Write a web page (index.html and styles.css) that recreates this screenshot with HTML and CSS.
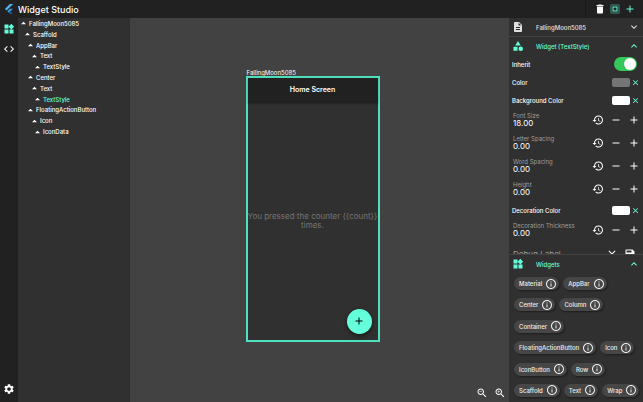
FILE: index.html
```html
<!DOCTYPE html>
<html lang="en">
<head>
  <meta charset="UTF-8">
  <meta name="viewport" content="width=device-width, initial-scale=1.0">
  <title>Widget Studio</title>
  <link rel="stylesheet" href="styles.css">
</head>
<body>

  <!-- icon set -->
  <svg class="sprite" aria-hidden="true">
    <symbol id="flutter" viewBox="0 0 24 24"><path fill="#54b9f5" d="M14.3 0L2.3 12 6 15.7 21.7 0z"/><path fill="#3f94e0" d="M14.3 11.1L7.9 17.5l3.7 3.7 10.1-10.1z"/><path fill="#17599c" d="M11.6 21.2l2.7 2.8h7.4l-6.4-6.5z"/></symbol>
    <symbol id="widgets" viewBox="0 0 24 24"><path d="M13 13v8h8v-8h-8zM3 21h8v-8H3v8zM3 3v8h8V3H3zm13.66-1.31L11 7.34 16.66 13l5.66-5.66-5.66-5.65z"/></symbol>
    <symbol id="code" viewBox="0 0 24 24"><path d="M9.4 16.6L4.8 12l4.6-4.6L8 6l-6 6 6 6 1.4-1.4zm5.2 0l4.6-4.6-4.6-4.6L16 6l6 6-6 6-1.4-1.4z"/></symbol>
    <symbol id="settings" viewBox="0 0 24 24"><path d="M19.14 12.94c.04-.3.06-.61.06-.94 0-.32-.02-.64-.07-.94l2.03-1.58c.18-.14.23-.41.12-.61l-1.92-3.32c-.12-.22-.37-.29-.59-.22l-2.39.96c-.5-.38-1.03-.7-1.62-.94l-.36-2.54c-.04-.24-.24-.41-.48-.41h-3.84c-.24 0-.43.17-.47.41l-.36 2.54c-.59.24-1.13.57-1.62.94l-2.39-.96c-.22-.08-.47 0-.59.22L2.74 8.87c-.12.21-.08.47.12.61l2.03 1.58c-.05.3-.09.63-.09.94s.02.64.07.94l-2.03 1.58c-.18.14-.23.41-.12.61l1.92 3.32c.12.22.37.29.59.22l2.39-.96c.5.38 1.03.7 1.62.94l.36 2.54c.05.24.24.41.48.41h3.84c.24 0 .44-.17.47-.41l.36-2.54c.59-.24 1.13-.56 1.62-.94l2.39.96c.22.08.47 0 .59-.22l1.92-3.32c.12-.22.07-.47-.12-.61l-2.01-1.58zM12 15.6c-1.98 0-3.6-1.62-3.6-3.6s1.62-3.6 3.6-3.6 3.6 1.62 3.6 3.6-1.62 3.6-3.6 3.6z"/></symbol>
    <symbol id="delete" viewBox="0 0 24 24"><path d="M6 19c0 1.1.9 2 2 2h8c1.1 0 2-.9 2-2V7H6v12zM19 4h-3.5l-1-1h-5l-1 1H5v2h14V4z"/></symbol>
    <symbol id="select-all" viewBox="0 0 24 24"><path d="M3 5h2V3c-1.1 0-2 .9-2 2zm0 8h2v-2H3v2zm4 8h2v-2H7v2zM3 9h2V7H3v2zm10-6h-2v2h2V3zm6 0v2h2c0-1.1-.9-2-2-2zM5 21v-2H3c0 1.1.9 2 2 2zm-2-4h2v-2H3v2zM9 3H7v2h2V3zm2 18h2v-2h-2v2zm8-8h2v-2h-2v2zm0 8c1.1 0 2-.9 2-2h-2v2zm0-12h2V7h-2v2zm0 8h2v-2h-2v2zm-4 4h2v-2h-2v2zm0-16h2V3h-2v2zM7 17h10V7H7v10zm2-8h6v6H9V9z"/></symbol>
    <symbol id="add" viewBox="0 0 24 24"><path d="M19 13h-6v6h-2v-6H5v-2h6V5h2v6h6v2z"/></symbol>
    <symbol id="remove" viewBox="0 0 24 24"><path d="M19 13H5v-2h14v2z"/></symbol>
    <symbol id="close" viewBox="0 0 24 24"><path d="M19 6.41L17.59 5 12 10.59 6.41 5 5 6.41 10.59 12 5 17.59 6.41 19 12 13.41 17.59 19 19 17.59 13.41 12z"/></symbol>
    <symbol id="save" viewBox="0 0 24 24"><path d="M17 3H5c-1.11 0-2 .9-2 2v14c0 1.1.89 2 2 2h14c1.1 0 2-.9 2-2V7l-4-4zm-5 16c-1.66 0-3-1.34-3-3s1.34-3 3-3 3 1.34 3 3-1.34 3-3 3zm3-10H5V5h10v4z"/></symbol>
    <symbol id="description" viewBox="0 0 24 24"><path d="M14 2H6c-1.1 0-1.99.9-1.99 2L4 20c0 1.1.89 2 1.99 2H18c1.1 0 2-.9 2-2V8l-6-6zm2 16H8v-2h8v2zm0-4H8v-2h8v2zm-3-5V3.5L18.5 9H13z"/></symbol>
    <symbol id="category" viewBox="0 0 24 24"><path d="M12 2l-5.5 9h11zM3 13.5h8v8H3z"/><circle cx="17.5" cy="17.5" r="4.5"/></symbol>
    <symbol id="expand-more" viewBox="0 0 24 24"><path d="M16.59 8.59L12 13.17 7.41 8.59 6 10l6 6 6-6z"/></symbol>
    <symbol id="expand-less" viewBox="0 0 24 24"><path d="M12 8l-6 6 1.41 1.41L12 10.83l4.59 4.58L18 14z"/></symbol>
    <symbol id="history" viewBox="0 0 24 24"><path d="M13 3c-4.97 0-9 4.03-9 9H1l3.89 3.89.07.14L9 12H6c0-3.87 3.13-7 7-7s7 3.13 7 7-3.13 7-7 7c-1.93 0-3.68-.79-4.94-2.06l-1.42 1.42C8.27 19.99 10.51 21 13 21c4.97 0 9-4.03 9-9s-4.03-9-9-9zm-1 5v5l4.28 2.54.72-1.21-3.5-2.08V8H12z"/></symbol>
    <symbol id="info" viewBox="0 0 24 24"><path d="M11 7h2v2h-2zm0 4h2v6h-2zm1-9C6.48 2 2 6.48 2 12s4.48 10 10 10 10-4.48 10-10S17.52 2 12 2zm0 18c-4.41 0-8-3.59-8-8s3.59-8 8-8 8 3.59 8 8-3.59 8-8 8z"/></symbol>
    <symbol id="zoom-out" viewBox="0 0 24 24"><path d="M15.5 14h-.79l-.28-.27C15.41 12.59 16 11.11 16 9.5 16 5.91 13.09 3 9.5 3S3 5.91 3 9.5 5.91 16 9.5 16c1.61 0 3.09-.59 4.23-1.57l.27.28v.79l5 4.99L20.49 19l-4.99-5zm-6 0C7.01 14 5 11.99 5 9.5S7.01 5 9.5 5 14 7.01 14 9.5 11.99 14 9.5 14zM7 9h5v1H7z"/></symbol>
    <symbol id="zoom-in" viewBox="0 0 24 24"><path d="M15.5 14h-.79l-.28-.27C15.41 12.59 16 11.11 16 9.5 16 5.91 13.09 3 9.5 3S3 5.91 3 9.5 5.91 16 9.5 16c1.61 0 3.09-.59 4.23-1.57l.27.28v.79l5 4.99L20.49 19l-4.99-5zm-6 0C7.01 14 5 11.99 5 9.5S7.01 5 9.5 5 14 7.01 14 9.5 11.99 14 9.5 14zM12 10h-2v2H9v-2H7V9h2V7h1v2h2v1z"/></symbol>
    <symbol id="caret" viewBox="0 0 6 4"><path d="M0 3.5L3 .5l3 3z"/></symbol>
  </svg>

  <header class="topbar">
    <svg class="logo"><use href="#flutter"/></svg>
    <h1>Widget Studio</h1>
    <div class="actions">
      <button aria-label="Delete"><svg class="icon"><use href="#delete"/></svg></button>
      <button class="accent" aria-label="Select"><svg class="icon"><use href="#select-all"/></svg></button>
      <button class="accent" aria-label="Add"><svg class="icon"><use href="#add"/></svg></button>
    </div>
  </header>

  <div class="workspace">
    <nav class="rail">
      <button class="accent" aria-label="Widgets"><svg class="icon"><use href="#widgets"/></svg></button>
      <button aria-label="Code"><svg class="icon"><use href="#code"/></svg></button>
      <button class="last" aria-label="Settings"><svg class="icon"><use href="#settings"/></svg></button>
    </nav>

    <aside class="tree-panel">
      <div class="tree">
        <button><svg class="caret"><use href="#caret"/></svg>FallingMoon5085</button>
        <button class="level-1"><svg class="caret"><use href="#caret"/></svg>Scaffold</button>
        <button class="level-2"><svg class="caret"><use href="#caret"/></svg>AppBar</button>
        <button class="level-3"><svg class="caret"><use href="#caret"/></svg>Text</button>
        <button class="level-4"><svg class="caret"><use href="#caret"/></svg>TextStyle</button>
        <button class="level-2"><svg class="caret"><use href="#caret"/></svg>Center</button>
        <button class="level-3"><svg class="caret"><use href="#caret"/></svg>Text</button>
        <button class="level-4 selected"><svg class="caret"><use href="#caret"/></svg>TextStyle</button>
        <button class="level-2"><svg class="caret"><use href="#caret"/></svg>FloatingActionButton</button>
        <button class="level-3"><svg class="caret"><use href="#caret"/></svg>Icon</button>
        <button class="level-4"><svg class="caret"><use href="#caret"/></svg>IconData</button>
      </div>
    </aside>

    <main class="canvas">
      <div class="artboard">
        <div class="artboard-name">FallingMoon5085</div>
        <div class="screen">
          <div class="appbar">Home Screen</div>
          <p class="message">You pressed the counter {{count}} times.</p>
          <button class="fab" aria-label="Increment"><svg class="icon"><use href="#add"/></svg></button>
        </div>
      </div>
      <div class="zoom">
        <button aria-label="Zoom out"><svg class="icon"><use href="#zoom-out"/></svg></button>
        <button aria-label="Zoom in"><svg class="icon"><use href="#zoom-in"/></svg></button>
      </div>
    </main>

    <aside class="inspector">
      <section class="properties">
        <button class="section-head file">
          <svg class="icon"><use href="#description"/></svg>
          <span>FallingMoon5085</span>
          <svg class="icon"><use href="#expand-more"/></svg>
        </button>
        <button class="section-head accent">
          <svg class="icon"><use href="#category"/></svg>
          <span>Widget (TextStyle)</span>
          <svg class="icon"><use href="#expand-less"/></svg>
        </button>

        <div class="row">
          <label for="inherit">Inherit</label>
          <input class="switch" type="checkbox" id="inherit" checked>
        </div>
        <div class="row">
          <span>Color</span>
          <button class="swatch grey" aria-label="Pick color"></button>
          <button class="clear" aria-label="Clear color"><svg><use href="#close"/></svg></button>
        </div>
        <div class="row">
          <span>Background Color</span>
          <button class="swatch" aria-label="Pick background color"></button>
          <button class="clear" aria-label="Clear background color"><svg><use href="#close"/></svg></button>
        </div>

        <div class="number-row">
          <div class="field"><label for="font-size">Font Size</label><input type="text" id="font-size" value="18.00"></div>
          <button aria-label="Reset"><svg class="icon"><use href="#history"/></svg></button>
          <button aria-label="Decrease"><svg class="icon"><use href="#remove"/></svg></button>
          <button aria-label="Increase"><svg class="icon"><use href="#add"/></svg></button>
        </div>
        <div class="number-row">
          <div class="field"><label for="letter-spacing">Letter Spacing</label><input type="text" id="letter-spacing" value="0.00"></div>
          <button aria-label="Reset"><svg class="icon"><use href="#history"/></svg></button>
          <button aria-label="Decrease"><svg class="icon"><use href="#remove"/></svg></button>
          <button aria-label="Increase"><svg class="icon"><use href="#add"/></svg></button>
        </div>
        <div class="number-row">
          <div class="field"><label for="word-spacing">Word Spacing</label><input type="text" id="word-spacing" value="0.00"></div>
          <button aria-label="Reset"><svg class="icon"><use href="#history"/></svg></button>
          <button aria-label="Decrease"><svg class="icon"><use href="#remove"/></svg></button>
          <button aria-label="Increase"><svg class="icon"><use href="#add"/></svg></button>
        </div>
        <div class="number-row">
          <div class="field"><label for="height">Height</label><input type="text" id="height" value="0.00"></div>
          <button aria-label="Reset"><svg class="icon"><use href="#history"/></svg></button>
          <button aria-label="Decrease"><svg class="icon"><use href="#remove"/></svg></button>
          <button aria-label="Increase"><svg class="icon"><use href="#add"/></svg></button>
        </div>

        <div class="row">
          <span>Decoration Color</span>
          <button class="swatch" aria-label="Pick decoration color"></button>
          <button class="clear" aria-label="Clear decoration color"><svg><use href="#close"/></svg></button>
        </div>
        <div class="number-row">
          <div class="field"><label for="thickness">Decoration Thickness</label><input type="text" id="thickness" value="0.00"></div>
          <button aria-label="Reset"><svg class="icon"><use href="#history"/></svg></button>
          <button aria-label="Decrease"><svg class="icon"><use href="#remove"/></svg></button>
          <button aria-label="Increase"><svg class="icon"><use href="#add"/></svg></button>
        </div>
        <div class="text-row">
          <input type="text" aria-label="Debug Label" placeholder="Debug Label">
          <button aria-label="Clear"><svg class="icon"><use href="#close"/></svg></button>
          <button aria-label="Save"><svg class="icon"><use href="#save"/></svg></button>
        </div>
      </section>

      <section class="library">
        <button class="section-head accent">
          <svg class="icon"><use href="#widgets"/></svg>
          <span>Widgets</span>
          <svg class="icon"><use href="#expand-less"/></svg>
        </button>
        <div class="chips">
          <button class="chip">Material<svg class="icon"><use href="#info"/></svg></button>
          <button class="chip">AppBar<svg class="icon"><use href="#info"/></svg></button>
          <button class="chip">Center<svg class="icon"><use href="#info"/></svg></button>
          <button class="chip">Column<svg class="icon"><use href="#info"/></svg></button>
          <button class="chip">Container<svg class="icon"><use href="#info"/></svg></button>
          <button class="chip">FloatingActionButton<svg class="icon"><use href="#info"/></svg></button>
          <button class="chip">Icon<svg class="icon"><use href="#info"/></svg></button>
          <button class="chip">IconButton<svg class="icon"><use href="#info"/></svg></button>
          <button class="chip">Row<svg class="icon"><use href="#info"/></svg></button>
          <button class="chip">Scaffold<svg class="icon"><use href="#info"/></svg></button>
          <button class="chip">Text<svg class="icon"><use href="#info"/></svg></button>
          <button class="chip">Wrap<svg class="icon"><use href="#info"/></svg></button>
        </div>
      </section>
    </aside>
  </div>

</body>
</html>
```
FILE: styles.css
```css
* {
  box-sizing: border-box;
}
body {
  margin: 0;
  height: 100vh;
  display: flex;
  flex-direction: column;
  overflow: hidden;
  background-color: #212121;
  color: #fff;
  font-family: Inter, "Liberation Sans", sans-serif;
  font-size: 6px;
}
button, input {
  font: inherit;
  color: inherit;
  background: none;
  border: none;
  margin: 0;
  padding: 0;
}
button {
  display: flex;
  align-items: center;
  justify-content: center;
  cursor: pointer;
}
svg {
  fill: currentColor;
  flex-shrink: 0;
}
.sprite {
  position: absolute;
  width: 0;
  height: 0;
}
.icon {
  width: 12px;
  height: 12px;
}
.accent {
  color: #64ffda;
}

/* top bar */
.topbar {
  display: flex;
  align-items: center;
  height: 18px;
  flex-shrink: 0;
}
.logo {
  width: 10px;
  height: 10px;
  margin: 0 4px;
}
h1 {
  margin: 0;
  font-size: 9px;
  font-weight: 500;
}
.actions {
  display: flex;
  justify-content: space-between;
  align-items: center;
  width: 58px;
  height: 18px;
  margin-left: auto;
  padding: 0 7px 0 8px;
  border-left: 1px solid #191919;
}

.workspace {
  display: flex;
  flex: 1;
  min-height: 0;
}
.rail {
  display: flex;
  flex-direction: column;
  gap: 8px;
  width: 18px;
  padding: 5px 0 7px;
}
.rail .last {
  margin-top: auto;
}

/* widget tree */
.tree-panel {
  width: 112px;
  background-color: #303030;
}
.tree {
  display: grid;
  grid-auto-rows: 1fr;
  min-height: 119px;
  font-weight: 500;
}
.tree button {
  justify-content: flex-start;
  gap: 3px;
  padding-left: 3px;
}
.tree .level-1 { padding-left: 7px; }
.tree .level-2 { padding-left: 10px; }
.tree .level-3 { padding-left: 14px; }
.tree .level-4 { padding-left: 17px; }
.tree .selected {
  color: #64ffda;
}
.caret {
  width: 5px;
  height: 4px;
  color: #fff;
}

/* canvas */
.canvas {
  position: relative;
  flex: 1;
  display: flex;
  align-items: center;
  justify-content: center;
  padding: 0 14px 10px 0;
  background-color: #424242;
}
.artboard {
  width: 134px;
}
.artboard-name {
  padding-left: 1px;
  line-height: 7px;
}
.screen {
  position: relative;
  display: flex;
  flex-direction: column;
  height: 266px;
  border: 2px solid #4fe0be;
  background-color: #303030;
}
.appbar {
  height: 25px;
  line-height: 24px;
  background-color: #212121;
  box-shadow: 0 1px 2px rgba(0, 0, 0, 0.3);
  font-size: 7px;
  font-weight: 600;
  text-align: center;
}
.message {
  margin: auto 0;
  color: #757575;
  font-size: 8px;
  line-height: 9px;
  text-align: center;
}
.fab {
  position: absolute;
  right: 6px;
  bottom: 6px;
  width: 25px;
  height: 25px;
  border-radius: 50%;
  background-color: #64ffda;
  color: #000;
  box-shadow: 0 2px 4px rgba(0, 0, 0, 0.5);
}
.zoom {
  position: absolute;
  right: 3px;
  bottom: 3px;
  display: flex;
  gap: 6px;
}

/* inspector */
.inspector {
  display: flex;
  flex-direction: column;
  width: 134px;
  background-color: #303030;
}
.properties {
  flex: 1;
  min-height: 0;
  overflow: hidden;
}
.section-head {
  width: 100%;
  height: 18px;
  padding: 0 3px;
  font-weight: 500;
}
.section-head span {
  flex: 1;
  padding-left: 12px;
  text-align: left;
}
.file {
  height: 19px;
  border-bottom: 1px solid #424242;
  color: #e0e0e0;
}
.row {
  display: flex;
  align-items: center;
  height: 18px;
  padding: 0 3px;
  font-weight: 500;
}
.row > :first-child {
  flex: 1;
}
.switch {
  appearance: none;
  display: flex;
  justify-content: flex-end;
  width: 23px;
  height: 14px;
  margin-right: 3px;
  padding: 1px;
  border-radius: 7px;
  background-color: #34c759;
}
.switch::before {
  content: "";
  width: 12px;
  height: 12px;
  border-radius: 50%;
  background-color: #fff;
}
.switch:not(:checked) {
  justify-content: flex-start;
  background-color: #757575;
}
.swatch {
  width: 18px;
  height: 9px;
  border-radius: 2px;
  background-color: #fff;
}
.swatch.grey {
  background-color: #757575;
}
.clear {
  width: 10px;
  color: #64ffda;
}
.clear svg {
  width: 9px;
  height: 9px;
}
.number-row {
  display: flex;
  align-items: center;
  gap: 6px;
  height: 23px;
  padding: 0 3px 2px 4px;
}
.field {
  flex: 1;
  min-width: 0;
}
.field label {
  display: block;
  color: #9e9e9e;
  line-height: 6px;
  white-space: nowrap;
}
.field input {
  display: block;
  width: 100%;
  height: 8px;
  font-size: 8px;
  line-height: 8px;
}
.text-row {
  display: flex;
  align-items: center;
  gap: 6px;
  height: 23px;
  padding: 0 7px 0 4px;
}
.text-row input {
  flex: 1;
  min-width: 0;
  font-size: 8px;
}
.text-row input::placeholder {
  color: #9e9e9e;
}

/* widget library */
.library {
  display: flex;
  flex-direction: column;
  height: 148px;
  border-top: 1px solid #424242;
}
.chips {
  flex: 1;
  display: flex;
  flex-wrap: wrap;
  align-content: space-between;
  column-gap: 4px;
  padding: 4px 2px 5px 5px;
}
.chip {
  gap: 3px;
  height: 13px;
  padding: 0 2px 0 5px;
  border-radius: 7px;
  background-color: #464646;
  box-shadow: 1px 1px 2px rgba(0, 0, 0, 0.4);
  color: #eee;
  font-weight: 500;
}
```
